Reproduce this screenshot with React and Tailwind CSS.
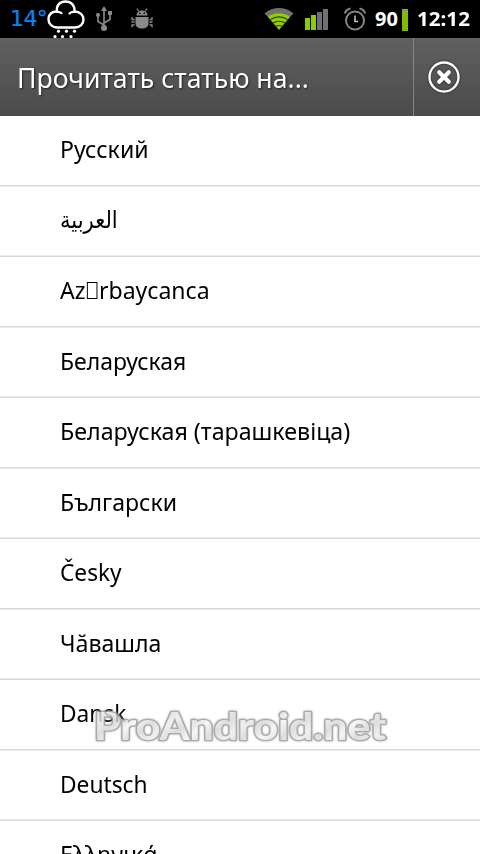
const rows = [
  { label: 'Русский', size: 'h-[71px]', text: 'scale-x-[0.963]' },
  { label: 'العربية', size: 'h-[70px]', text: 'scale-x-[0.88]', arabic: true },
  { label: 'Az', rest: 'rbaycanca', size: 'h-[71px]', text: 'scale-x-[0.96]' },
  { label: 'Беларуская', size: 'h-[70px]', text: 'scale-x-[0.957]' },
  { label: 'Беларуская (тарашкевіца)', size: 'h-[71px]', text: 'scale-x-[0.968]' },
  { label: 'Български', size: 'h-[70px]', text: 'scale-x-[0.962]' },
  { label: 'Česky', size: 'h-[71px]', text: 'scale-x-[0.945]' },
  { label: 'Чӑвашла', size: 'h-[70px]', text: 'scale-x-[0.962]' },
  { label: 'Dansk', size: 'h-[71px]', text: 'scale-x-[0.945]' },
  { label: 'Deutsch', size: 'h-[70px]', text: 'scale-x-[0.948]' },
  { label: 'Ελληνικά', size: 'h-[71px]', text: 'scale-x-[0.97]' },
];

function StatusBar() {
  return (
    <header className="relative flex h-[38px] shrink-0 items-center bg-black text-white">
      <span className="ml-[10px] w-[37px] whitespace-nowrap font-['DejaVu_Sans','Noto_Sans',sans-serif] text-[22px] leading-[34px] tracking-[-0.6px] text-[#0a84f0] [-webkit-text-stroke:0.2px_#0a84f0]">14°</span>
      <svg className="h-[38px] w-[38px]" viewBox="0 0 38 38" fill="none">
        <path d="M10 27.5C4.5 27.5 1.500 23 1.500 19.500C1.500 14 5.500 11 10 11.500C9 5 13 1.500 18.500 1.500C24 1.500 28 5 27.500 11.500C33 11.500 36.500 15 36.500 19.500C36.500 24 33 27.500 28 27.500Z" stroke="#fff" strokeWidth="2.4" />
        <path d="M9.500 12C11.500 11.500 13 12 14.500 13.200M27.500 12C25.500 11.500 23.500 12.500 22.500 13.500" stroke="#fff" strokeWidth="2.200" strokeLinecap="round" />
        <g fill="#fff">
          <circle cx="11.500" cy="31.200" r="1.600" /><circle cx="19.500" cy="31.200" r="1.600" /><circle cx="27.500" cy="31.200" r="1.600" />
          <circle cx="8" cy="36.500" r="1.600" /><circle cx="15.500" cy="36.500" r="1.600" /><circle cx="24" cy="36.500" r="1.600" />
        </g>
      </svg>
      <svg className="ml-[10px] h-[26px] w-[18px]" viewBox="0 0 18 26" fill="none" stroke="#8a8a8a" strokeWidth="1.600">
        <path d="M9 4V22M9 19L3 15.500V9.500M9 17L15 13.500V8" />
        <path d="M9 0L12 5H6Z" fill="#8a8a8a" stroke="none" />
        <circle cx="9" cy="22" r="3" fill="#8a8a8a" stroke="none" />
        <circle cx="3" cy="9" r="2" fill="#8a8a8a" stroke="none" />
        <path d="M13 5H17V9H13Z" fill="#8a8a8a" stroke="none" />
      </svg>
      <svg className="ml-[18px] h-[22px] w-[22px]" viewBox="0 0 22 22" fill="none" stroke="#8a8a8a" strokeWidth="1.300">
        <path d="M5.500 7.500C5.500 0.800 16.500 0.800 16.500 7.500Z" fill="#8a8a8a" stroke="none" />
        <path d="M4.500 9H17.500V15.500C17.500 18.500 14.500 20.500 11 20.500S4.500 18.500 4.500 15.500Z" fill="#8a8a8a" stroke="none" />
        <path d="M7.500 3L6 0.500M14.500 3L16 0.500M3.600 11.500H1V9M3.600 14H0.500M3.600 17H1V19.500M18.400 11.500H21V9M18.400 14H21.500M18.400 17H21V19.500" />
        <path d="M8 5.300H9.500M12.500 5.300H14" stroke="#000" strokeWidth="1.300" />
      </svg>
      <svg className="ml-[111px] h-[24px] w-[30px]" viewBox="0 0 30 24" fill="none">
        <path d="M0.500 6.500C9 -0.800 21 -0.800 29.500 6.500L25.500 10.500C19 5.500 11 5.500 4.500 10.500Z" fill="#707070" />
        <path d="M4 10C10 5 20 5 26 10L15 23Z" fill="#8fce08" />
        <path d="M6.500 12.500C11.500 9 18.500 9 23.500 12.500M9 16C12.500 13.700 17.500 13.700 21 16M12 19.300C13.500 18.300 16.500 18.300 18 19.300" stroke="#2c4700" strokeWidth="1.200" />
      </svg>
      <div className="ml-[11px] flex h-[22px] items-end gap-px">
        <i className="h-[12px] w-[5px] bg-[#8dcc00]" />
        <i className="h-[15px] w-[5px] bg-[#8dcc00]" />
        <i className="h-[18px] w-[5px] bg-[#707070]" />
        <i className="h-[21px] w-[5px] bg-[#707070]" />
      </div>
      <svg className="ml-[16px] h-[24px] w-[22px]" viewBox="0 0 22 24" fill="none" stroke="#858585" strokeWidth="2">
        <circle cx="11" cy="13.500" r="9" />
        <path d="M0.800 6.500C1.500 4 3.500 2 6.500 1.500M21.200 6.500C20.500 4 18.500 2 15.500 1.500" />
        <path d="M11 8.500V14.500H14" stroke="#c8c8c8" strokeWidth="1.500" />
      </svg>
      <span className="ml-[9px] w-[24px] whitespace-nowrap font-['Noto_Sans',sans-serif] text-[20px] font-bold leading-[38px]">90</span>
      <i className="ml-[3px] mt-[2px] h-[22px] w-[6px] border-t-2 border-[#8f8f8f] bg-[#82bc00]" />
      <span className="ml-[9px] origin-left scale-x-[1.03] whitespace-nowrap font-['Noto_Sans',sans-serif] text-[20px] font-bold leading-[38px]">12:12</span>
    </header>
  );
}

function TitleBar() {
  return (
    <div className="flex h-[78px] shrink-0 bg-linear-to-b from-[#606060] to-[#4b4b4b]">
      <h1 className="w-[414px] whitespace-nowrap border-r border-[#858585] pl-[17px] font-['Noto_Sans',sans-serif] text-[28px] font-normal leading-[79px] text-white [text-shadow:1px_1px_2px_#222]">
        <span className="inline-block origin-left scale-x-[0.951]">Прочитать статью на...</span>
      </h1>
      <button aria-label="Закрыть" className="flex flex-1 items-center justify-center pr-[6px]">
        <svg className="h-[36px] w-[36px] drop-shadow-[0_0_1px_#222]" viewBox="0 0 36 36" fill="none" stroke="#fff">
          <circle cx="18" cy="18" r="14.500" strokeWidth="2.400" />
          <path d="M13.200 13.200L22.800 22.800M22.800 13.200L13.200 22.800" strokeWidth="4.200" strokeLinecap="round" />
        </svg>
      </button>
    </div>
  );
}

function Row({ row, index }) {
  return (
    <li className={`flex shrink-0 flex-col ${row.size}`}>
      <div className={`flex-1 pl-[60px] text-[24px] leading-[66px] text-black ${row.arabic ? "font-['DejaVu_Sans',sans-serif]" : "font-['Noto_Sans',sans-serif]"}`}>
        <span className={`inline-block origin-left whitespace-nowrap ${row.text}`}>
          {row.label}
          {row.rest && <><i className="mx-[1.5px] inline-block h-[17px] w-[11px] border border-black" />{row.rest}</>}
        </span>
      </div>
      <i className={index % 2 ? 'h-px shrink-0 bg-[#eaeaea]' : 'h-px shrink-0 bg-[#d8d8d8]'} />
      <i className={index % 2 ? 'h-px shrink-0 bg-[#d8d8d8]' : 'h-px shrink-0 bg-[#eaeaea]'} />
    </li>
  );
}

export default function App() {
  return (
    <main className="relative flex h-[854px] w-[480px] flex-col overflow-hidden bg-white">
      <StatusBar />
      <TitleBar />
      <ul className="flex flex-col">
        {rows.map((row, i) => <Row key={row.label} row={row} index={i} />)}
      </ul>
      <svg className="absolute left-[88px] top-[700px] h-[50px] w-[306px] opacity-80" viewBox="0 0 306 50">
        <defs>
          <linearGradient id="silver" gradientUnits="userSpaceOnUse" x1="0" y1="0" x2="14" y2="18" spreadMethod="reflect">
            <stop offset="0" stopColor="#f4f4f4" />
            <stop offset="0.500" stopColor="#d6d6d6" />
            <stop offset="1" stopColor="#ececec" />
          </linearGradient>
        </defs>
        <text x="6" y="39.500" textLength="292" lengthAdjust="spacingAndGlyphs" fontFamily="Lato, sans-serif" fontWeight="900" fontSize="37" fill="url(#silver)" stroke="#959595" strokeWidth="2.600" strokeLinejoin="round" className="drop-shadow-[0_0_1px_#aaa] [paint-order:stroke]">ProAndroid.net</text>
      </svg>
    </main>
  );
}
